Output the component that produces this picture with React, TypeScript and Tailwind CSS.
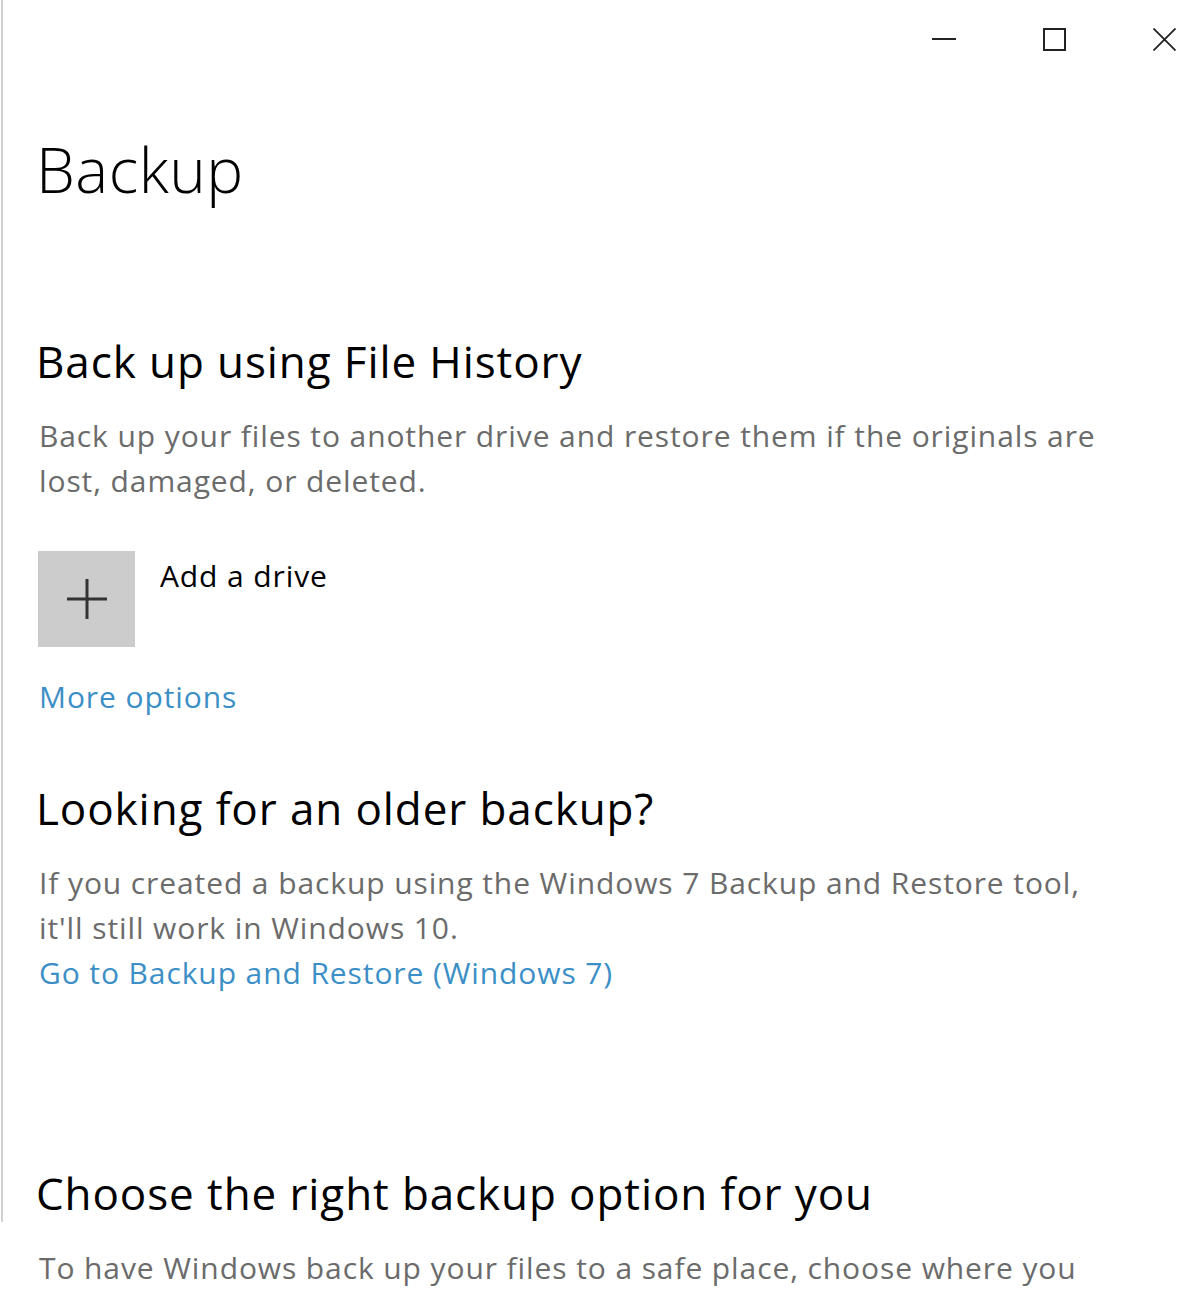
import React from 'react'

function WindowControls() {
  return (
    <div className="flex h-[78px] items-start justify-end gap-[87px] pr-[24px] pt-[28px]">
      {/* minimize */}
      <svg width="24" height="23" viewBox="0 0 24 23">
        <line x1="0" y1="11" x2="24" y2="11" stroke="#222" strokeWidth="2" />
      </svg>
      {/* maximize */}
      <svg width="23" height="23" viewBox="0 0 23 23">
        <rect x="1" y="1" width="21" height="21" fill="none" stroke="#222" strokeWidth="2" />
      </svg>
      {/* close */}
      <svg width="23" height="23" viewBox="0 0 23 23">
        <path d="M0.5 0.5 L22.5 22.5 M22.5 0.5 L0.5 22.5" stroke="#222" strokeWidth="1.8" />
      </svg>
    </div>
  )
}

export default function App() {
  return (
    <div
      className="flex min-h-[1294px] overflow-hidden bg-white text-black"
      style={{ fontFamily: '"Open Sans", "Noto Sans", sans-serif' }}
    >
      {/* Left edge of the settings window */}
      <div className="w-[6px] shrink-0">
        <div className="ml-px h-[1222px] w-[2px] bg-[#d2d2d2]" />
      </div>

      <div className="flex-1">
        <WindowControls />

        <div className="pl-[30px]">
          <h1 className="mt-[61px] text-[62px] font-light leading-[60px] tracking-[0.5px]">Backup</h1>

          {/* File History */}
          <h2 className="mt-[136px] text-[44px] leading-[52px] tracking-[0.9px]">Back up using File History</h2>
          <p className="mt-[26px] pl-[3px] text-[30px] leading-[45px] tracking-[0.9px] text-[#6b6b6b]">
            Back up your files to another drive and restore them if the originals are
            <br />
            lost, damaged, or deleted.
          </p>

          <div className="mt-[48px] flex items-start gap-[25px] pl-[2px]">
            <button className="flex h-[96px] w-[97px] items-center justify-center bg-[#cccccc]">
              <svg width="40" height="40" viewBox="0 0 40 40">
                <path d="M20 0 V40 M0 20 H40" stroke="#333" strokeWidth="3" />
              </svg>
            </button>
            <span className="mt-[2px] text-[30px] leading-[45px] tracking-[0.9px]">Add a drive</span>
          </div>

          <a className="mt-[27px] block pl-[3px] text-[30px] leading-[45px] tracking-[0.9px] text-[#3c8fc6]">
            More options
          </a>

          {/* Older backup */}
          <h2 className="mt-[63px] text-[44px] leading-[52px] tracking-[0.9px]">Looking for an older backup?</h2>
          <p className="mt-[26px] pl-[3px] text-[30px] leading-[45px] tracking-[0.9px] text-[#6b6b6b]">
            If you created a backup using the Windows 7 Backup and Restore tool,
            <br />
            it'll still work in Windows 10.
          </p>
          <a className="block pl-[3px] text-[30px] leading-[45px] tracking-[0.9px] text-[#3c8fc6]">
            Go to Backup and Restore (Windows 7)
          </a>

          {/* Right option */}
          <h2 className="mt-[172px] text-[44px] leading-[52px] tracking-[0.9px]">
            Choose the right backup option for you
          </h2>
          <p className="mt-[26px] whitespace-nowrap pl-[3px] text-[30px] leading-[45px] tracking-[0.9px] text-[#6b6b6b]">
            To have Windows back up your files to a safe place, choose where you
          </p>
        </div>
      </div>
    </div>
  )
}
